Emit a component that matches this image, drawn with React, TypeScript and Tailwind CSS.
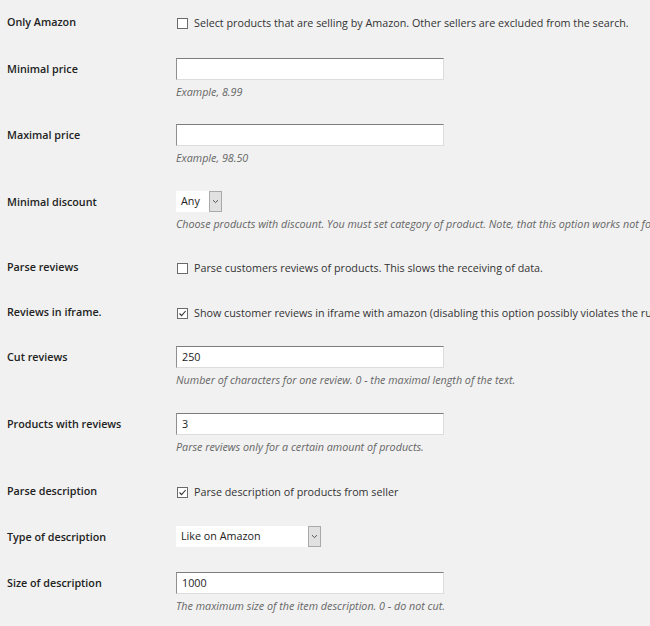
import React from 'react';

type Row =
  | { kind: 'check'; label: string; text: string; checked?: boolean; h: string }
  | { kind: 'input'; label: string; value?: string; hint: string; h: string }
  | { kind: 'select'; label: string; value: string; width: string; hint?: string; h: string };

const rows: Row[] = [
  { kind: 'check', label: 'Only Amazon', text: 'Select products that are selling by Amazon. Other sellers are excluded from the search.', h: 'h-[47px]' },
  { kind: 'input', label: 'Minimal price', hint: 'Example, 8.99', h: 'h-[66px]' },
  { kind: 'input', label: 'Maximal price', hint: 'Example, 98.50', h: 'h-[67px]' },
  { kind: 'select', label: 'Minimal discount', value: 'Any', width: 'w-[46px]', hint: 'Choose products with discount. You must set category of product. Note, that this option works not for all categories.', h: 'h-[65px]' },
  { kind: 'check', label: 'Parse reviews', text: 'Parse customers reviews of products. This slows the receiving of data.', h: 'h-[45px]' },
  { kind: 'check', label: 'Reviews in iframe.', text: 'Show customer reviews in iframe with amazon (disabling this option possibly violates the rules of amazon).', checked: true, h: 'h-[45px]' },
  { kind: 'input', label: 'Cut reviews', value: '250', hint: 'Number of characters for one review. 0 - the maximal length of the text.', h: 'h-[67px]' },
  { kind: 'input', label: 'Products with reviews', value: '3', hint: 'Parse reviews only for a certain amount of products.', h: 'h-[67px]' },
  { kind: 'check', label: 'Parse description', text: 'Parse description of products from seller', checked: true, h: 'h-[46px]' },
  { kind: 'select', label: 'Type of description', value: 'Like on Amazon', width: 'w-[145px]', h: 'h-[46px]' },
  { kind: 'input', label: 'Size of description', value: '1000', hint: 'The maximum size of the item description. 0 - do not cut.', h: 'h-[65px]' },
];

function Checkbox({ checked }: { checked?: boolean }) {
  return (
    <span className="w-[11px] h-[11px] border border-[#6b6b6b] bg-white flex items-center justify-center shrink-0">
      {checked && (
        <svg width="9" height="9" viewBox="0 0 9 9">
          <path d="M1.5 4.5 L3.6 6.6 L7.6 2" stroke="#333" strokeWidth="1.1" fill="none" />
        </svg>
      )}
    </span>
  );
}

function TextInput({ value }: { value?: string }) {
  return (
    <div className="w-[268px] h-[22px] bg-white border border-[#dcdcdc] border-t-[#7d7d7d] border-l-[#8f8f8f] flex items-center px-[5px] text-[10.75px] text-[#222]">
      {value}
    </div>
  );
}

function Select({ value, width }: { value: string; width: string }) {
  return (
    <div className={`${width} h-[21px] bg-white flex items-stretch text-[10.75px] text-[#222]`}>
      <span className="flex-1 flex items-center pl-[5px] whitespace-nowrap">{value}</span>
      <span className="w-[13px] bg-[#e1e1e1] border border-[#a9a9a9] flex items-center justify-center">
        <svg width="7" height="5" viewBox="0 0 7 5">
          <path d="M1 1.2 L3.5 3.6 L6 1.2" stroke="#555" strokeWidth="1" fill="none" />
        </svg>
      </span>
    </div>
  );
}

function Hint({ text }: { text: string }) {
  return <div className="mt-[5px] text-[10.75px] italic text-[#666] whitespace-nowrap leading-[14px]">{text}</div>;
}

export default function App() {
  return (
    <div
      className="w-[650px] h-[626px] overflow-hidden bg-[#f1f1f1] text-[#222]"
      style={{ fontFamily: '"Open Sans", "Noto Sans", sans-serif' }}
    >
      {rows.map((r) => (
        <div key={r.label} className={`flex ${r.h}`}>
          <div className="w-[176px] shrink-0 pl-[7px] pt-[15px] text-[10.75px] font-semibold leading-[14px] text-[#222]">
            {r.label}
          </div>
          <div className="flex-1 min-w-0 overflow-hidden">
            {r.kind === 'check' && (
              <div className="flex items-center gap-[6px] pt-[16px] pl-[1px] text-[10.75px] leading-[14px] text-[#333] whitespace-nowrap">
                <Checkbox checked={r.checked} />
                <span>{r.text}</span>
              </div>
            )}
            {r.kind === 'input' && (
              <div className="pt-[11px]">
                <TextInput value={r.value} />
                <Hint text={r.hint} />
              </div>
            )}
            {r.kind === 'select' && (
              <div className="pt-[11px]">
                <Select value={r.value} width={r.width} />
                {r.hint && <Hint text={r.hint} />}
              </div>
            )}
          </div>
        </div>
      ))}
    </div>
  );
}
